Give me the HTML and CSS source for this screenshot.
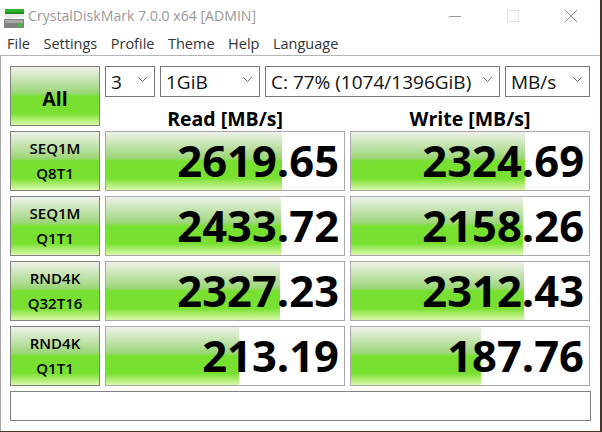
FILE: index.html
```html
<!DOCTYPE html>
<html lang="en">
<head>
<meta charset="utf-8">
<title>CrystalDiskMark 7.0.0 x64 [ADMIN]</title>
<link rel="stylesheet" href="styles.css">
</head>
<body>
<div class="window">
  <header class="titlebar">
    <svg class="app-icon" width="24" height="24" viewBox="0 0 24 24">
      <rect x="4" y="5" width="19" height="5" fill="#2fb52f"/>
      <rect x="4" y="8" width="19" height="2" fill="#1c8f1c"/>
      <polygon points="3,10 23,10 23,13 4,15" fill="#e8e8e8"/>
      <rect x="3" y="15" width="20" height="9" rx="1" fill="#808080"/>
      <rect x="4" y="16" width="18" height="3" fill="#a8a8a8"/>
      <rect x="17" y="19" width="4" height="4" fill="#3fc03f"/>
    </svg>
    <span class="title">CrystalDiskMark 7.0.0 x64 [ADMIN]</span>
    <div class="controls">
      <svg width="58" height="14" viewBox="0 0 58 14"><rect x="23" y="7" width="12" height="1" fill="#999"/></svg>
      <svg width="58" height="14" viewBox="0 0 58 14"><rect x="23.5" y="1.5" width="11" height="11" fill="none" stroke="#e3e3e3"/></svg>
      <svg width="58" height="14" viewBox="0 0 58 14"><path d="M23 1 L35 13 M35 1 L23 13" stroke="#8a8a8a" fill="none"/></svg>
    </div>
  </header>
  <nav class="menu">
    <span>File</span><span>Settings</span><span>Profile</span><span>Theme</span><span>Help</span><span>Language</span>
  </nav>
  <main class="client">
    <div class="top">
      <button class="label all">All</button>
      <div class="top-right">
        <div class="combos">
          <div class="combo c-count">3<svg class="chev" width="9" height="5" viewBox="0 0 9 5"><path d="M0.5 0.5 L4.5 4.5 L8.5 0.5" fill="none" stroke="#666"/></svg></div>
          <div class="combo c-size">1GiB<svg class="chev" width="9" height="5" viewBox="0 0 9 5"><path d="M0.5 0.5 L4.5 4.5 L8.5 0.5" fill="none" stroke="#666"/></svg></div>
          <div class="combo c-drive">C: 77% (1074/1396GiB)<svg class="chev" width="9" height="5" viewBox="0 0 9 5"><path d="M0.5 0.5 L4.5 4.5 L8.5 0.5" fill="none" stroke="#666"/></svg></div>
          <div class="combo c-unit">MB/s<svg class="chev" width="9" height="5" viewBox="0 0 9 5"><path d="M0.5 0.5 L4.5 4.5 L8.5 0.5" fill="none" stroke="#666"/></svg></div>
        </div>
        <div class="heads"><span>Read [MB/s]</span><span>Write [MB/s]</span></div>
      </div>
    </div>
    <div class="rows">
      <button class="label">SEQ1M<br>Q8T1</button>
      <div class="val" style="background-size:176px 100%">2619.65</div>
      <div class="val" style="background-size:174px 100%">2324.69</div>
      <button class="label">SEQ1M<br>Q1T1</button>
      <div class="val" style="background-size:175px 100%">2433.72</div>
      <div class="val" style="background-size:172px 100%">2158.26</div>
      <button class="label">RND4K<br>Q32T16</button>
      <div class="val" style="background-size:174px 100%">2327.23</div>
      <div class="val" style="background-size:173px 100%">2312.43</div>
      <button class="label">RND4K<br>Q1T1</button>
      <div class="val" style="background-size:133px 100%">213.19</div>
      <div class="val" style="background-size:130px 100%">187.76</div>
    </div>
    <div class="message"></div>
  </main>
</div>
</body>
</html>
```
FILE: styles.css
```css
* { box-sizing: border-box; }
html, body { margin: 0; height: 100%; }
body { background: #4a3526; overflow: hidden; font-family: "Open Sans", "Noto Sans", sans-serif; }
.window { width: 600px; height: 431px; background: #fff; display: flex; flex-direction: column; }
.titlebar { height: 31px; display: flex; align-items: center; padding-left: 1px; flex: none; }
.app-icon { flex: none; }
.title { margin-left: 3px; font-size: 14.1px; color: #999; }
.controls { margin-left: auto; display: flex; }
.controls svg { display: block; }
.menu { height: 24px; display: flex; gap: 13.5px; padding-left: 7px; font-size: 14.5px; color: #333; align-items: center; flex: none; }
.client { flex: 1; border-top: 1px solid #b5b5b5; border-left: 1px solid #a8a8a8; padding: 10px 9px 9px 9px; display: flex; flex-direction: column; gap: 5px; background: #fff; }
.top { display: grid; grid-template-columns: 90px 1fr; grid-template-rows: 60px; gap: 5px; height: 60px; }
.top-right { display: flex; flex-direction: column; min-height: 0; }
.combos { display: flex; gap: 5px; height: 31px; flex: none; }
.combo { border: 1px solid #777; display: flex; align-items: center; justify-content: space-between; padding: 0 7px 0 5px; font-size: 19px; color: #111; }
.chev { margin-top: -5px; }
.c-count { width: 50px; }
.c-size { width: 100px; }
.c-drive { width: 235px; }
.c-unit { width: 85px; }
.heads { height: 29px; display: grid; grid-template-columns: 240px 240px; gap: 5px; font-weight: 700; font-size: 19.5px; color: #000; text-align: center; line-height: 43px; }
.label { margin: 0; padding: 0; border: 1px solid #808080; font-family: inherit; font-weight: 600; font-size: 15px; line-height: 25px; color: #000;
  background: linear-gradient(to bottom, #eef1ea 0%, #9cd678 45%, #78e030 50%, #78e030 80%, #dcf9ac 100%); }
.all { font-size: 19.5px; font-weight: 700; padding-top: 4px; }
.rows { display: grid; grid-template-columns: 90px 240px 240px; grid-auto-rows: 60px; gap: 5px; }
.val { border: 1px solid #a8a8a8; font-weight: 700; font-size: 43.5px; line-height: 58px; text-align: right; padding-right: 5px; color: #000;
  background-color: #fff; background-repeat: no-repeat;
  background-image: linear-gradient(to bottom, #eef1ea 0%, #9cd678 45%, #78e030 50%, #78e030 80%, #dcf9ac 100%); }
.message { height: 30px; border: 1px solid #808080; }
```
